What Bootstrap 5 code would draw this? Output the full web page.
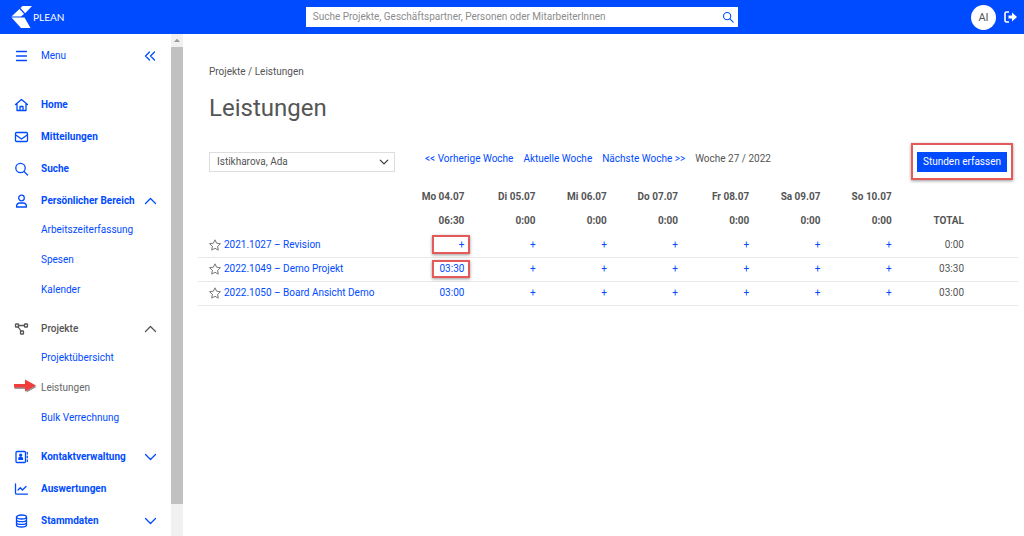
<!DOCTYPE html>
<html lang="de">
<head>
<meta charset="utf-8">
<meta name="viewport" content="width=device-width, initial-scale=1">
<title>PLEAN – Leistungen</title>
<link href="https://cdn.jsdelivr.net/npm/bootstrap@5.3.0/dist/css/bootstrap.min.css" rel="stylesheet">
<style>
  :root { --plean-blue: #004bff; --plean-text: #555; --mark-red: #e45a58; }
  body { font: 400 10px/16px Roboto, "Liberation Sans", sans-serif; color: var(--plean-text); background: #fff; }
  a { color: var(--plean-blue); text-decoration: none; }
  svg { display: block; flex: none; }
  .line-icon { fill: none; stroke: currentColor; stroke-width: 1.3; stroke-linecap: round; stroke-linejoin: round; }

  .topbar { height: 34px; background: var(--plean-blue); color: #fff; padding: 0 7px 0 11px; }
  .side-slot { flex: 1 1 0; }
  .brand-slot { flex-basis: 16px; }
  .brand { color: #fff; font: 400 10px/16px Lato, sans-serif; gap: 1px; }
  .searchbox { width: 43%; height: 20px; background: #fff; color: var(--plean-blue); padding: 0 4px 0 7px; }
  .searchbox input { border: 0; outline: 0; padding: 0; min-width: 0; color: var(--plean-text); }
  .searchbox input::placeholder { color: #8c8c8c; opacity: 1; }
  .plain-btn { border: 0; background: none; padding: 0; color: inherit; }
  .avatar { width: 25px; height: 25px; background: #fff; color: #555; font-size: 11px; padding-top: 1px; }

  .shell { height: calc(100vh - 34px); }
  .sidebar { width: 184px; flex: none; }
  .side-menu { padding: 8px 14px 0; min-width: 0; color: var(--plean-blue); }
  .nav-row { height: 28px; width: 100%; color: var(--plean-blue); font-weight: 700; text-align: left; white-space: nowrap; }
  .nav-row > svg:first-child { margin-right: 12px; }
  .nav-row.menu-row { font-weight: 400; margin-bottom: 21px; }
  .nav-row.is-open { color: var(--plean-text); font-weight: 500; }
  .main-list { gap: 4px; }
  .sub-list { padding: 0 0 6px 27px; }
  .sub-list a { display: flex; align-items: center; height: 30px; }
  .sub-list a.active { color: #666; }
  .pointer { left: -28px; top: 6px; }

  .scroll-track { width: 12px; flex: none; margin-right: 1px; background: #f1f1f1; }
  .scroll-up { height: 13px; }
  .scroll-thumb { height: 91%; background: #c1c1c1; }

  .content { padding: 30px 6px 0 14px; min-width: 0; }
  .inset-row { padding: 0 11px; }
  .crumbs a { color: inherit; }
  .page-title { font-size: 24px; line-height: 32px; font-weight: 400; margin: 12px 0 27px; }
  .person-select { width: 186px; height: 20px; border: 1px solid #ddd; border-radius: 0; padding: 0 24px 0 7px;
    font-size: 10px; line-height: 18px; color: var(--plean-text); background-size: 10px 10px; background-position: right 5px center; }
  .week-nav { gap: 10px; padding: 0 0 6px 30px; }
  .record-btn { border-radius: 0; border: 0; height: 20px; padding: 0 6px; font-size: 10px; line-height: 20px; background: var(--plean-blue); color: #fff; }
  .marked { position: relative; }
  .marked::after { content: ""; position: absolute; border: 2px solid var(--mark-red); box-shadow: 0 1px 3px #0006; pointer-events: none; }
  .record-slot::after { inset: -9px -6px -8px; }
  td.marked::after { width: 38px; top: 2px; bottom: 3px; right: -6px; }

  .hours { width: 100%; table-layout: fixed; margin-top: 12px; text-align: right; }
  .hours th, .hours td { height: 24px; padding: 0; vertical-align: middle; }
  .hours thead th { font-weight: 700; }
  .hours tbody tr { border-bottom: 1px solid #e8e8e8; height: 24px; }
  .hours .col-project { width: 23.8%; }
  .hours .col-total { width: 15.4%; }
  .hours th:first-child { text-align: left; padding-left: 11px; font-weight: 400; }
  .hours tr > :last-child { padding-right: 54px; }
  .project-link { gap: 3px; }
  .star { fill: none; stroke: #777; stroke-width: 1; }
</style>
</head>
<body>
<header class="topbar d-flex align-items-center">
  <div class="side-slot brand-slot d-flex">
    <a href="#" class="brand d-flex align-items-center">
      <svg width="21" height="22" viewBox="0 0 21 22" fill="#fff"><path d="m.500 10.500 8-7.500 4.500 5L10 10.500zM9.500 2 11.500 0H21l-6.800 7.200zM.500 11.500H13.500L19.500 22H10z"/></svg>
      <span>PLEAN</span>
    </a>
  </div>
  <form class="searchbox d-flex align-items-center">
    <input class="flex-grow-1" type="text" aria-label="Suche" placeholder="Suche Projekte, Geschäftspartner, Personen oder MitarbeiterInnen">
    <button type="button" class="plain-btn" aria-label="Suchen"><svg class="line-icon" width="12" height="12" viewBox="0 0 14 14"><circle cx="6" cy="6" r="4.2"/><path d="m9.2 9.2 3.8 3.8"/></svg></button>
  </form>
  <div class="side-slot d-flex align-items-center justify-content-end gap-2">
    <button type="button" class="plain-btn avatar rounded-circle">AI</button>
    <button type="button" class="plain-btn" aria-label="Abmelden"><svg width="13" height="12" viewBox="0 0 13 12"><path d="M5 1H2.500Q1 1 1 2.500v7Q1 11 2.500 11H5" fill="none" stroke="#fff" stroke-width="1.600"/><path d="M4.500 4.500H8V1.500L13 6l-5 4.500v-3H4.500z" fill="#fff"/></svg></button>
  </div>
</header>

<div class="shell d-flex">
  <aside class="sidebar d-flex overflow-hidden">
    <nav class="side-menu flex-grow-1">
      <button type="button" class="plain-btn nav-row menu-row d-flex align-items-center">
        <svg class="line-icon" width="15" height="14" viewBox="0 0 15 14"><path d="M2.500 2.500h10M2.500 7h10M2.500 11.500h10"/></svg>
        <span class="flex-grow-1">Menu</span>
        <svg class="line-icon" width="14" height="12" viewBox="0 0 14 12"><path d="M6.500 2 2.500 6l4 4M11.500 2l-4 4 4 4"/></svg>
      </button>
      <ul class="main-list list-unstyled d-flex flex-column m-0">
        <li><a href="#" class="nav-row d-flex align-items-center">
          <svg class="line-icon" width="15" height="14" viewBox="0 0 15 14"><path d="m1.500 6.500 6-5 6 5M3 5.800V12.500h9V5.800M6 12.300V8.500h3v3.800"/></svg>Home</a></li>
        <li><a href="#" class="nav-row d-flex align-items-center">
          <svg class="line-icon" width="15" height="14" viewBox="0 0 15 14"><rect x="1.500" y="2.500" width="12" height="9" rx="1"/><path d="m1.800 5 5.700 4 5.700-4"/></svg>Mitteilungen</a></li>
        <li><a href="#" class="nav-row d-flex align-items-center">
          <svg class="line-icon" width="15" height="14" viewBox="0 0 15 14"><circle cx="6.500" cy="6" r="4.700"/><path d="m10 9.500 3.500 3.500"/></svg>Suche</a></li>
        <li>
          <button type="button" class="plain-btn nav-row d-flex align-items-center">
            <svg class="line-icon" width="15" height="14" viewBox="0 0 15 14"><circle cx="7.500" cy="4" r="2.800"/><path d="M2.500 13c0-3 1.500-4 3.500-4h3c2 0 3.500 1 3.500 4z"/></svg>
            <span class="flex-grow-1">Persönlicher Bereich</span>
            <svg class="line-icon" width="14" height="10" viewBox="0 0 14 10"><path d="m2.500 7.500 5-5 5 5"/></svg>
          </button>
          <ul class="sub-list list-unstyled">
            <li><a href="#">Arbeitszeiterfassung</a></li>
            <li><a href="#">Spesen</a></li>
            <li><a href="#">Kalender</a></li>
          </ul>
        </li>
        <li>
          <button type="button" class="plain-btn nav-row is-open d-flex align-items-center">
            <svg class="line-icon" width="15" height="14" viewBox="0 0 15 14"><rect x="1.500" y="2" width="3" height="3" rx=".6"/><rect x="10.500" y="2" width="3" height="3" rx=".6"/><rect x="6.500" y="9" width="3" height="3" rx=".6"/><path d="M4.500 3.500h6M4.200 5l2.800 4"/></svg>
            <span class="flex-grow-1">Projekte</span>
            <svg class="line-icon" width="14" height="10" viewBox="0 0 14 10"><path d="m2.500 7.500 5-5 5 5"/></svg>
          </button>
          <ul class="sub-list list-unstyled">
            <li><a href="#">Projektübersicht</a></li>
            <li class="position-relative">
              <svg class="pointer position-absolute" width="24" height="14" viewBox="0 0 24 14"><path d="M1 5.500h12V1.500L23 7l-10 5.500V9H1z" fill="#999" transform="translate(.5 1)"/><path d="M1 5h11V.5l11 6L12 12.500V8.500H1z" fill="#f03c3c"/></svg>
              <a href="#" class="active">Leistungen</a></li>
            <li><a href="#">Bulk Verrechnung</a></li>
          </ul>
        </li>
        <li>
          <button type="button" class="plain-btn nav-row d-flex align-items-center">
            <svg class="line-icon" width="15" height="14" viewBox="0 0 15 14"><rect x="2" y="1.500" width="9.500" height="11" rx="1"/><path d="M13.300 2.500v1.500M13.300 6.200v1.500M13.300 10v1.500"/><circle cx="6.700" cy="5.200" r="1" fill="currentColor"/><path d="M4.800 9.300c0-1.500.8-1.800 1.900-1.800s1.900.3 1.900 1.800z" fill="currentColor"/></svg>
            <span class="flex-grow-1">Kontaktverwaltung</span>
            <svg class="line-icon" width="14" height="10" viewBox="0 0 14 10"><path d="m2.500 2.500 5 5 5-5"/></svg>
          </button>
        </li>
        <li><a href="#" class="nav-row d-flex align-items-center">
          <svg class="line-icon" width="15" height="14" viewBox="0 0 15 14"><path d="M1.500 2v9Q1.500 12.200 2.700 12.200H13.500M4 8l2.300-2.300L8.500 8 12 4.500"/></svg>Auswertungen</a></li>
        <li>
          <button type="button" class="plain-btn nav-row d-flex align-items-center">
            <svg class="line-icon" width="15" height="14" viewBox="0 0 15 14"><ellipse cx="7.500" cy="3" rx="5" ry="2"/><path d="M2.500 3v8c0 1.200 2.200 2 5 2s5-.8 5-2V3M2.500 5.700c0 1.200 2.200 2 5 2s5-.8 5-2M2.500 8.400c0 1.200 2.200 2 5 2s5-.8 5-2"/></svg>
            <span class="flex-grow-1">Stammdaten</span>
            <svg class="line-icon" width="14" height="10" viewBox="0 0 14 10"><path d="m2.500 2.500 5 5 5-5"/></svg>
          </button>
        </li>
      </ul>
    </nav>
    <div class="scroll-track" aria-hidden="true">
      <div class="scroll-up"><svg width="12" height="13" viewBox="0 0 12 13"><path d="m3 8 3-3.200 3 3.200z" fill="#999"/></svg></div>
      <div class="scroll-thumb"></div>
    </div>
  </aside>

  <main class="content flex-grow-1">
    <div class="inset-row">
      <nav class="crumbs" aria-label="Pfad"><a href="#">Projekte</a> / <a href="#">Leistungen</a></nav>
      <h1 class="page-title">Leistungen</h1>
    </div>
    <div class="inset-row d-flex align-items-center">
      <select class="form-select person-select" aria-label="Person"><option>Istikharova, Ada</option></select>
      <div class="week-nav d-flex">
        <a href="#">&lt;&lt; Vorherige Woche</a>
        <a href="#">Aktuelle Woche</a>
        <a href="#">Nächste Woche &gt;&gt;</a>
        <span>Woche 27 / 2022</span>
      </div>
      <div class="marked record-slot ms-auto d-flex"><button type="button" class="btn record-btn">Stunden erfassen</button></div>
    </div>

    <table class="hours">
      <colgroup><col class="col-project"><col span="7"><col class="col-total"></colgroup>
      <thead>
        <tr><th></th><th>Mo 04.07</th><th>Di 05.07</th><th>Mi 06.07</th><th>Do 07.07</th><th>Fr 08.07</th><th>Sa 09.07</th><th>So 10.07</th><th></th></tr>
        <tr><th></th><th>06:30</th><th>0:00</th><th>0:00</th><th>0:00</th><th>0:00</th><th>0:00</th><th>0:00</th><th>TOTAL</th></tr>
      </thead>
      <tbody>
        <tr><th scope="row"><a href="#" class="project-link d-flex align-items-center"><svg class="star" width="12" height="12" viewBox="0 0 12 12"><path d="m6 .8 1.600 3.400 3.800.5-2.800 2.600.7 3.800L6 9.300l-3.300 1.800.7-3.800L.6 4.700l3.800-.5z"/></svg>2021.1027 – Revision</a></th><td class="marked"><a href="#">+</a></td><td><a href="#">+</a></td><td><a href="#">+</a></td><td><a href="#">+</a></td><td><a href="#">+</a></td><td><a href="#">+</a></td><td><a href="#">+</a></td><td>0:00</td></tr>
        <tr><th scope="row"><a href="#" class="project-link d-flex align-items-center"><svg class="star" width="12" height="12" viewBox="0 0 12 12"><path d="m6 .8 1.600 3.400 3.800.5-2.800 2.600.7 3.800L6 9.300l-3.300 1.800.7-3.800L.6 4.700l3.800-.5z"/></svg>2022.1049 – Demo Projekt</a></th><td class="marked"><a href="#">03:30</a></td><td><a href="#">+</a></td><td><a href="#">+</a></td><td><a href="#">+</a></td><td><a href="#">+</a></td><td><a href="#">+</a></td><td><a href="#">+</a></td><td>03:30</td></tr>
        <tr><th scope="row"><a href="#" class="project-link d-flex align-items-center"><svg class="star" width="12" height="12" viewBox="0 0 12 12"><path d="m6 .8 1.600 3.400 3.800.5-2.800 2.600.7 3.800L6 9.300l-3.300 1.800.7-3.800L.6 4.700l3.800-.5z"/></svg>2022.1050 – Board Ansicht Demo</a></th><td><a href="#">03:00</a></td><td><a href="#">+</a></td><td><a href="#">+</a></td><td><a href="#">+</a></td><td><a href="#">+</a></td><td><a href="#">+</a></td><td><a href="#">+</a></td><td>03:00</td></tr>
      </tbody>
    </table>
  </main>
</div>
<script src="https://cdn.jsdelivr.net/npm/bootstrap@5.3.0/dist/js/bootstrap.bundle.min.js"></script>
</body>
</html>
